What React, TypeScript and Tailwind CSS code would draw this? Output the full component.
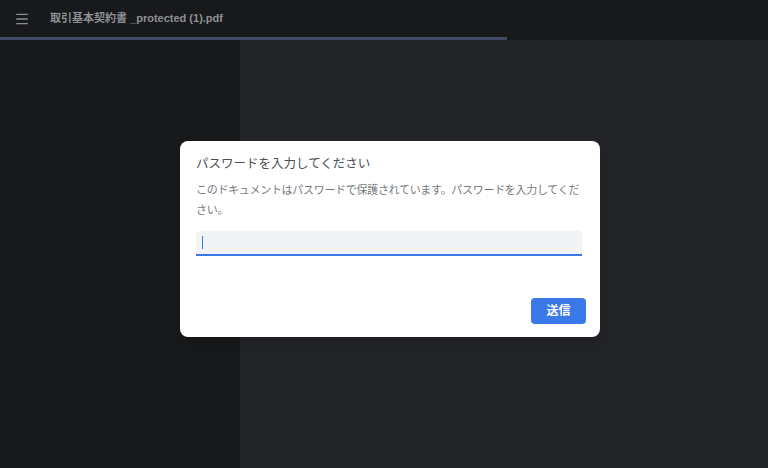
import { Menu } from "lucide-react";

export default function App() {
  return (
    <div
      className="w-[768px] h-[468px] flex flex-col bg-[#232427] overflow-hidden"
      style={{ fontFamily: '"Liberation Sans", "Noto Sans CJK JP", sans-serif' }}
    >
      {/* Toolbar */}
      <div className="h-[37px] flex items-center bg-[#18191b] shrink-0">
        <Menu size={16} strokeWidth={2} className="ml-[14px] text-[#8a8d91]" />
        <span className="ml-[20px] text-[11px] font-bold text-[#8d9095]">
          取引基本契約書 _protected (1).pdf
        </span>
      </div>
      <div className="h-[3px] bg-[#18191b] shrink-0">
        <div className="h-[3px] w-[507px] bg-[#3e4a63]" />
      </div>

      <div className="flex-1 flex relative">
        <div className="w-[240px] bg-[#18191b]" />
        <div className="flex-1 bg-[#232427]" />

        {/* Dialog */}
        <div className="absolute left-[180px] top-[101px] w-[420px] h-[196px] bg-white rounded-[8px] shadow-lg px-4 pt-[13px] flex flex-col">
          <h2 className="text-[12.5px] text-[#4a4d51] leading-[20px]">
            パスワードを入力してください
          </h2>
          <p className="mt-[6px] text-[11px] tracking-[-0.3px] leading-[20px] text-[#75797e]">
            このドキュメントはパスワードで保護されています。パスワードを入力してください。
          </p>
          <div className="mt-[11px] mr-[2px] h-[25px] bg-[#f1f3f4] rounded-t-[4px] border-b-2 border-[#3b78e7] flex items-center pl-[6px]">
            <div className="w-[1px] h-[13px] bg-[#3b78e7]" />
          </div>
          <div className="flex justify-end mt-[42px] -mr-[2px]">
            <button className="w-[55px] h-[26px] bg-[#3b78e7] text-white text-[12px] font-semibold rounded-[4px]">
              送信
            </button>
          </div>
        </div>
      </div>
    </div>
  );
}
